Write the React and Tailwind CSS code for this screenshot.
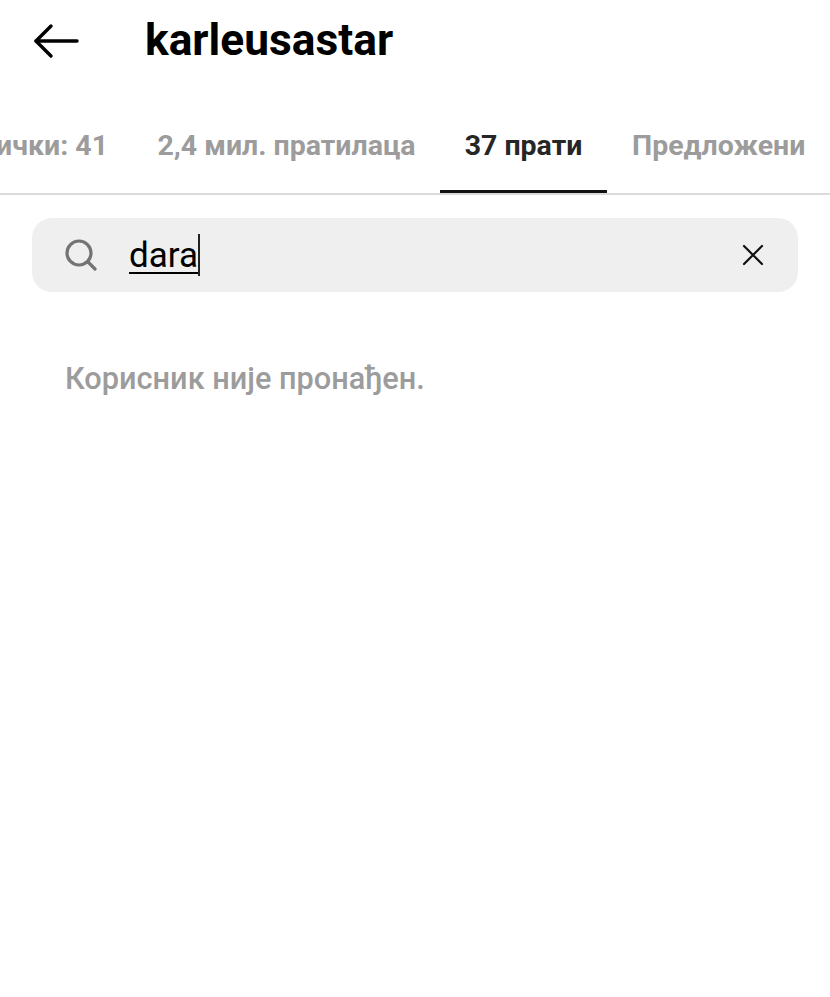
export default function App() {
  return (
    <div className="w-[830px] h-[997px] bg-white overflow-hidden font-['Roboto',sans-serif]">
      <header className="h-[82px] flex items-center">
        <div className="w-[145px] pl-[33px] flex items-center">
          <svg width="46" height="36" viewBox="0 0 46 36" fill="none" stroke="#000" strokeWidth="3.4" strokeLinecap="round" strokeLinejoin="round">
            <path d="M44 18H3" />
            <path d="M18 3 3 18l15 15" />
          </svg>
        </div>
        <h1 className="text-[44.3px] leading-none font-bold text-black pb-[2px]">karleusastar</h1>
      </header>
      <nav className="h-[113px] border-b-2 border-[#dbdbdb] flex items-stretch overflow-hidden pt-[17px] text-[28.5px] font-bold text-[#9c9c9c]">
        <div className="w-[133px] shrink-0 flex items-center justify-end pr-[25px] overflow-hidden"><span className="whitespace-nowrap">ички: 41</span></div>
        <div className="w-[307px] shrink-0 flex items-center justify-center"><span className="whitespace-nowrap">2,4 мил. пратилаца</span></div>
        <div className="w-[167px] shrink-0 flex items-center justify-center text-[#262626] relative">
          <span>37 прати</span>
          <span className="absolute left-0 right-0 bottom-0 h-[3px] bg-[#111111]" />
        </div>
        <div className="flex-1 flex items-center pl-[25px]"><span className="whitespace-nowrap">Предложени</span></div>
      </nav>
      <div className="mt-[23px] mx-[32px] w-[766px] h-[74px] rounded-[20px] bg-[#efefef] flex items-center">
        <svg className="ml-[33px]" width="32" height="32" viewBox="0 0 32 32" fill="none" stroke="#737373" strokeWidth="3.2" strokeLinecap="round">
          <circle cx="14" cy="14" r="12" />
          <path d="m23 23 7 7" />
        </svg>
        <span className="ml-[32px] pt-[1px] text-[35px] leading-none text-black underline decoration-[2px] underline-offset-[5px]">dara</span>
        <span className="w-[1.5px] h-[42px] bg-[#222222]" />
        <svg className="ml-auto mr-[33px]" width="24" height="24" viewBox="0 0 24 24" fill="none" stroke="#111" strokeWidth="2.2" strokeLinecap="round">
          <path d="M3 3l18 18M21 3 3 21" />
        </svg>
      </div>
      <p className="mt-[72px] ml-[65px] text-[30.7px] leading-none font-medium text-[#9c9c9c]">Корисник није пронађен.</p>
    </div>
  );
}
